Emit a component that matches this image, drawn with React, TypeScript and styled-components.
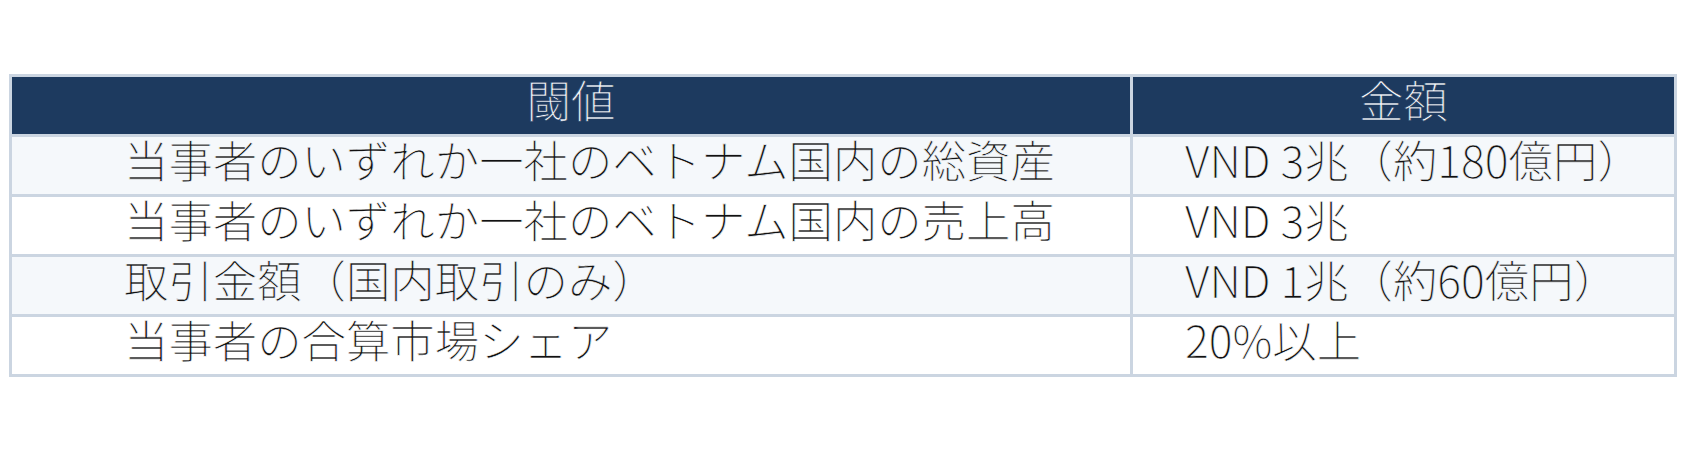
import styled, { createGlobalStyle } from 'styled-components'

const rows = [
  { label: '当事者のいずれか一社のベトナム国内の総資産', value: 'VND 3兆（約180億円）' },
  { label: '当事者のいずれか一社のベトナム国内の売上高', value: 'VND 3兆' },
  { label: '取引金額（国内取引のみ）', value: 'VND 1兆（約60億円）' },
  { label: '当事者の合算市場シェア', value: '20%以上' },
]

const HEAD_BG = '#1d3a5f'
const STRIPE_BG = '#f5f8fb'
const PLAIN_BG = '#ffffff'

const App = () => {
  return (
    <>
      <GlobalStyle />
      <Page>
        <Table>
          <Row>
            <HeadCell>閾値</HeadCell>
            <HeadCell>金額</HeadCell>
          </Row>

          {rows.map((row, i) => (
            <Row key={row.label}>
              <Cell $striped={i % 2 === 0} $indent={112}>
                {row.label}
              </Cell>
              <Cell $striped={i % 2 === 0} $indent={52}>
                {row.value}
              </Cell>
            </Row>
          ))}
        </Table>
      </Page>
    </>
  )
}

export default App

const GlobalStyle = createGlobalStyle`
    body {
        margin: 0;
        background: #ffffff;
        font-family: "Noto Sans CJK JP Light", "Noto Sans CJK JP", "Noto Sans", sans-serif;
    }
`

const Page = styled.div`
    padding: 74px 8px 0 9px;
`

const Table = styled.div`
    display: flex;
    flex-direction: column;
    gap: 3px;
    width: 1668px;
    padding: 3px;
    box-sizing: border-box;
    background: #cbd5e1;
`

const Row = styled.div`
    display: grid;
    grid-template-columns: 1118px 541px;
    gap: 3px;
`

const HeadCell = styled.div`
    height: 57px;
    box-sizing: border-box;
    padding-bottom: 13px;
    background: ${HEAD_BG};
    color: #f4f6f9;
    font-size: 44.4px;
    font-weight: 300;
    line-height: 44px;
    text-align: center;
    white-space: nowrap;
    /* thins the regular face towards the light weight */
    -webkit-text-stroke: 0.6px ${HEAD_BG};
`

const Cell = styled.div<{ $striped: boolean; $indent: number }>`
    height: 57px;
    box-sizing: border-box;
    padding: 0 0 13px ${(p) => p.$indent}px;
    background: ${(p) => (p.$striped ? STRIPE_BG : PLAIN_BG)};
    color: #111111;
    font-size: 44.4px;
    font-weight: 300;
    line-height: 44px;
    white-space: nowrap;
    -webkit-text-stroke: 0.6px ${(p) => (p.$striped ? STRIPE_BG : PLAIN_BG)};
`
